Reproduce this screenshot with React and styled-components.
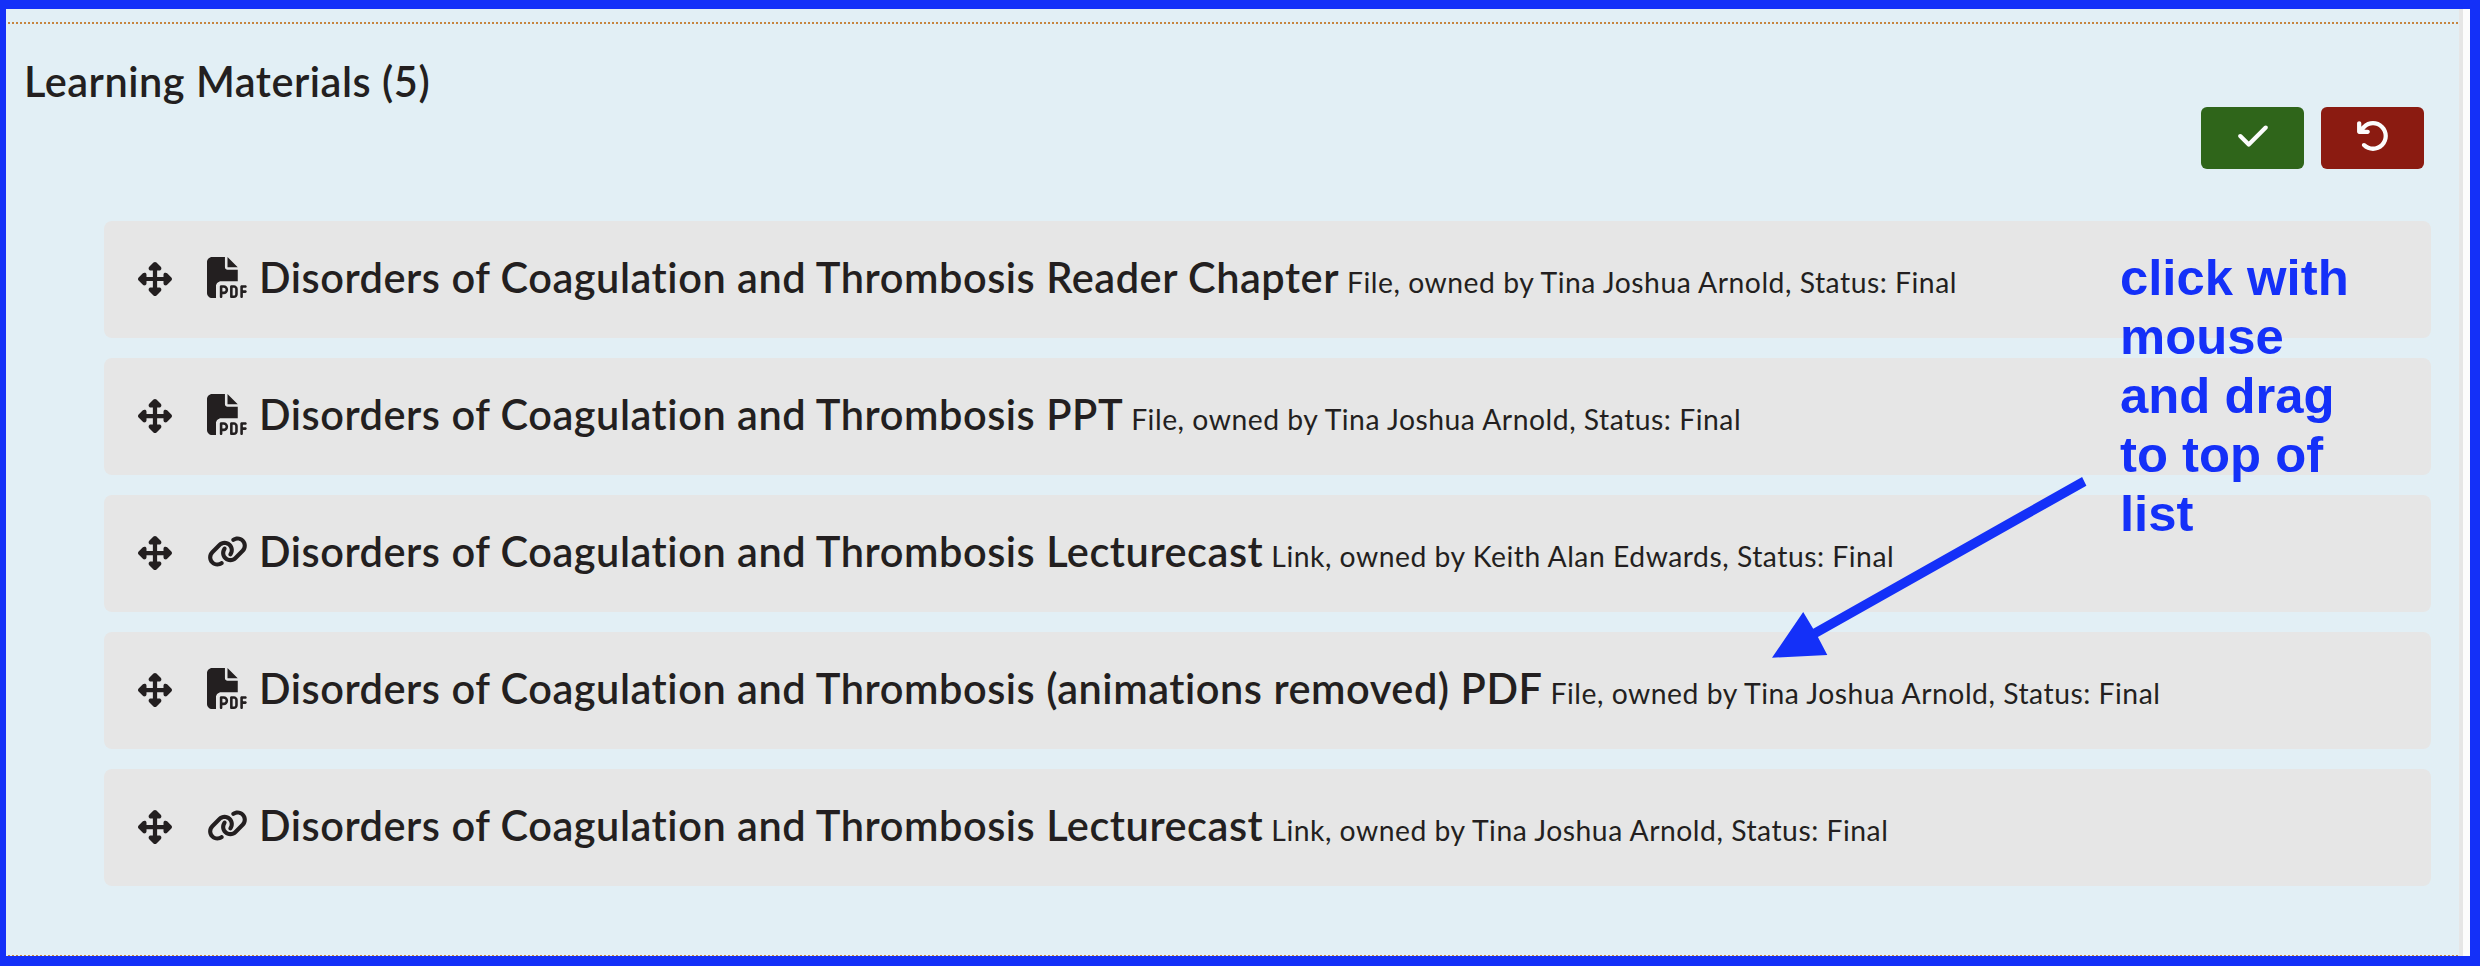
import React from "react";
import styled, { createGlobalStyle } from "styled-components";
import { FaCheck, FaLink, FaFilePdf, FaUpDownLeftRight, FaArrowRotateLeft } from "react-icons/fa6";

const Global = createGlobalStyle`
  * { box-sizing: border-box; }
  body { margin: 0; }
`;

const Frame = styled.div`
  position: relative;
  width: 2480px;
  height: 966px;
  overflow: hidden;
  border: solid #1430f8;
  border-width: 9px 10px 10px 6px;
  background: #fcfcfc;
  color: #231f20;
  font-family: Lato, sans-serif;
  font-variant-ligatures: none;
  padding-right: 7px;
`;

const Panel = styled.section`
  height: 100%;
  display: flex;
  flex-direction: column;
  background: #e2eff5;
  border-right: 4px solid #e6e6e6;
`;

const Rule = styled.hr`
  flex: none;
  width: 100%;
  height: ${(p) => p.$height}px;
  margin: ${(p) => p.$top} 0 0;
  border: 0;
  background: repeating-linear-gradient(90deg, transparent 0 2px, #c68540 2px 4px);
`;

const Header = styled.header`
  display: flex;
  justify-content: space-between;
  align-items: flex-start;
  height: 197px;
  padding: 32px 35px 0 18px;
`;

const Heading = styled.h2`
  margin: 0;
  font-size: 41.5px;
  line-height: 50px;
  font-weight: 600;
  white-space: nowrap;
  letter-spacing: 0.52px;
`;

const Actions = styled.div`
  display: flex;
  gap: 17px;
  padding-top: 51px;
`;

const Button = styled.button`
  display: flex;
  align-items: center;
  justify-content: center;
  width: 103px;
  height: 62px;
  padding: 0 0 4px;
  border: 0;
  border-radius: 6px;
  color: #fcfcfc;
  background: ${(p) => (p.$danger ? "#8b1b11" : "#2f651a")};
  font-size: 34px;
`;

const List = styled.ul`
  display: flex;
  flex-direction: column;
  gap: 20px;
  margin: 0;
  padding: 0 28px 0 98px;
  list-style: none;
`;

const Item = styled.li`
  display: flex;
  height: 117px;
  padding: 0 34px;
  border-radius: 8px;
  background: #e6e6e6;
`;

const Handle = styled.span`
  display: flex;
  flex: none;
  width: 69px;
  padding-top: 41px;
  font-size: 34px;
`;

const TypeIcon = styled.span`
  display: flex;
  flex: none;
  width: 52px;
  padding-top: 36px;
  font-size: 41px;
`;

const Label = styled.div`
  display: flex;
  align-items: baseline;
  height: 50px;
  margin-top: 31px;
  line-height: 50px;
  white-space: nowrap;
`;

const Title = styled.span`
  font-size: 41.5px;
  font-weight: 600;
  letter-spacing: 0.54px;
`;

const Meta = styled.span`
  margin-left: 8px;
  font-size: 28.3px;
  letter-spacing: 0.52px;
`;

const Note = styled.div`
  position: absolute;
  left: 2114px;
  top: 239px;
  width: 250px;
  color: #1430f8;
  font: bold 50.8px/59px "Liberation Sans", Arial, sans-serif;
  white-space: pre-line;
`;

const Arrow = styled.svg`
  position: absolute;
  left: 1766px;
  top: 468px;
  width: 315px;
  height: 181px;
  fill: #1430f8;
`;

const items = [
  ["pdf", "Reader Chapter", "File", "Tina Joshua Arnold"],
  ["pdf", "PPT", "File", "Tina Joshua Arnold"],
  ["link", "Lecturecast", "Link", "Keith Alan Edwards"],
  ["pdf", "(animations removed) PDF", "File", "Tina Joshua Arnold"],
  ["link", "Lecturecast", "Link", "Tina Joshua Arnold"],
];

export default function App() {
  return (
    <>
      <Global />
      <Frame>
        <Panel>
          <Rule $height={2} $top="13px" />
          <Header>
            <Heading>Learning Materials (5)</Heading>
            <Actions>
              <Button aria-label="Save"><FaCheck /></Button>
              <Button $danger aria-label="Undo"><FaArrowRotateLeft /></Button>
            </Actions>
          </Header>
          <List>
            {items.map(([kind, name, type, owner], i) => (
              <Item key={i}>
                <Handle><FaUpDownLeftRight /></Handle>
                <TypeIcon>{kind === "pdf" ? <FaFilePdf /> : <FaLink />}</TypeIcon>
                <Label>
                  <Title>Disorders of Coagulation and Thrombosis {name}</Title>
                  <Meta>{type}, owned by {owner}, Status: Final</Meta>
                </Label>
              </Item>
            ))}
          </List>
          <Rule $height={1} $top="auto" />
        </Panel>
        <Arrow viewBox="1772 477 315 181">
          <path d="M1772 657.7 1803.2 612 1813.2 628.7 2082.1 477 2086.4 485.7 1817.9 637 1827.3 655Z" />
        </Arrow>
        <Note>{"click with\nmouse\nand drag\nto top of\nlist"}</Note>
      </Frame>
    </>
  );
}
